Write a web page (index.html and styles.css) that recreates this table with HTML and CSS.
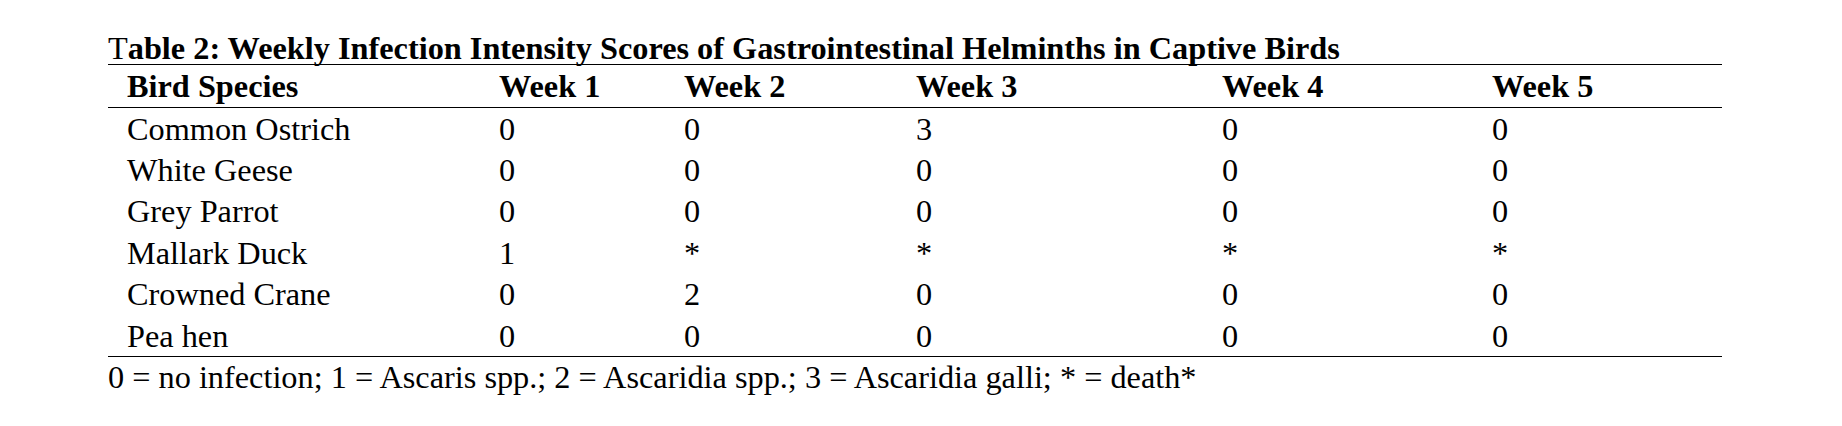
FILE: index.html
```html
<!DOCTYPE html>
<html lang="en">
<head>
<meta charset="utf-8">
<title>Table 2</title>
<link rel="stylesheet" href="styles.css">
</head>
<body>
<div class="page">
  <div class="caption"><span class="cap-t">T</span>able 2: Weekly Infection Intensity Scores of Gastrointestinal Helminths in Captive Birds</div>
  <table class="data">
    <colgroup>
      <col class="c-species">
      <col class="c-w1">
      <col class="c-w2">
      <col class="c-w3">
      <col class="c-w4">
      <col class="c-w5">
    </colgroup>
    <thead>
      <tr><th>Bird Species</th><th>Week 1</th><th>Week 2</th><th>Week 3</th><th>Week 4</th><th>Week 5</th></tr>
    </thead>
    <tbody>
      <tr><td>Common Ostrich</td><td>0</td><td>0</td><td>3</td><td>0</td><td>0</td></tr>
      <tr><td>White Geese</td><td>0</td><td>0</td><td>0</td><td>0</td><td>0</td></tr>
      <tr><td>Grey Parrot</td><td>0</td><td>0</td><td>0</td><td>0</td><td>0</td></tr>
      <tr><td>Mallark Duck</td><td>1</td><td>*</td><td>*</td><td>*</td><td>*</td></tr>
      <tr><td>Crowned Crane</td><td>0</td><td>2</td><td>0</td><td>0</td><td>0</td></tr>
      <tr><td>Pea hen</td><td>0</td><td>0</td><td>0</td><td>0</td><td>0</td></tr>
    </tbody>
  </table>
  <div class="note">0 = no infection; 1 = Ascaris spp.; 2 = Ascaridia spp.; 3 = Ascaridia galli; * = death*</div>
</div>
</body>
</html>
```

FILE: styles.css
```css
html, body {
  margin: 0;
  padding: 0;
  background: #fff;
}

body {
  font-family: "Times New Roman", "Liberation Serif", Tinos, serif;
  color: #000;
}

.page {
  padding: 32px 0 0 108px;
  width: 1614px;
}

.caption {
  font-weight: bold;
  font-size: 32.3px;
  line-height: 32px;
  white-space: nowrap;
}

.cap-t {
  font-weight: normal;
}

.data {
  width: 1614px;
  border-collapse: collapse;
  table-layout: fixed;
  font-size: 32.3px;
}

.c-species { width: 372px; }
.c-w1 { width: 185px; }
.c-w2 { width: 232px; }
.c-w3 { width: 306px; }
.c-w4 { width: 270px; }
.c-w5 { width: 249px; }

.data thead tr {
  border-top: 1.5px solid #000;
  border-bottom: 1.5px solid #000;
}

.data tbody tr:last-child {
  border-bottom: 1.5px solid #000;
}

.data th {
  text-align: left;
  font-weight: bold;
  height: 42px;
  padding: 0 0 0 19px;
  line-height: 32px;
}

.data td {
  text-align: left;
  height: 41.4px;
  padding: 0 0 0 19px;
  line-height: 32px;
}

.note {
  font-size: 32.3px;
  line-height: 40px;
}
```
